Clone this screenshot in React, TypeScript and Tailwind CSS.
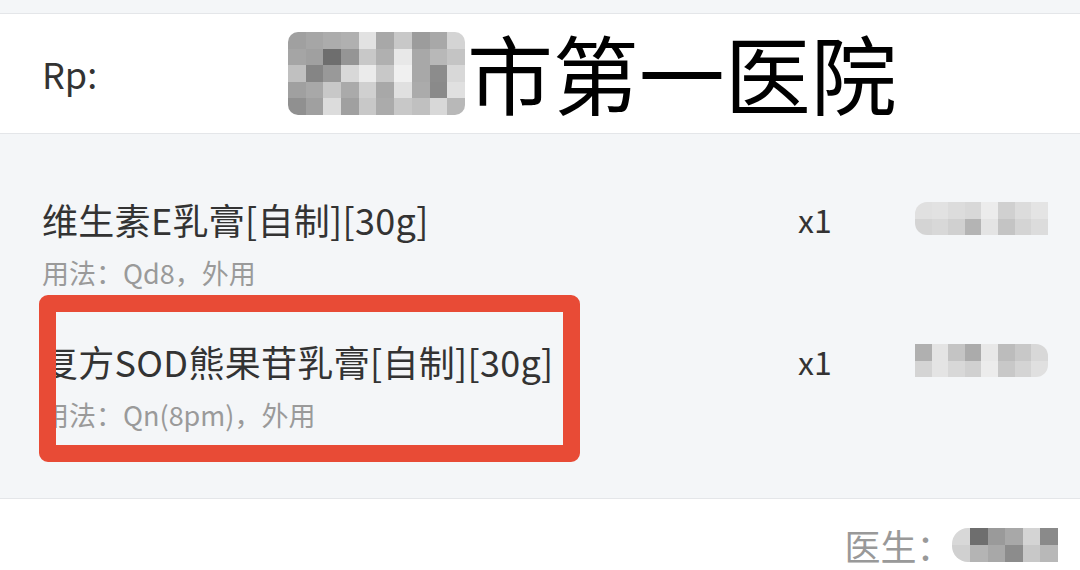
import React from "react";

const hosp: string[][] = [
  ["bg-[#a0a0a0]", "bg-[#a6a6a6]", "bg-[#acacac]", "bg-[#b0b0b0]", "bg-[#e2e2e2]", "bg-[#a8a8a8]", "bg-[#c8c8c8]", "bg-[#9c9c9c]", "bg-[#a8a8a8]", "bg-[#d4d4d4]"],
  ["bg-[#a5a5a5]", "bg-[#a0a0a0]", "bg-[#6e6e6e]", "bg-[#959595]", "bg-[#c8c8c8]", "bg-[#b0b0b0]", "bg-[#e8e8e8]", "bg-[#a8a8a8]", "bg-[#b8b8b8]", "bg-[#c4c4c4]"],
  ["bg-[#c0c0c0]", "bg-[#858585]", "bg-[#999999]", "bg-[#d8d8d8]", "bg-[#ebebeb]", "bg-[#c8c8c8]", "bg-[#f0f0f0]", "bg-[#a8a8a8]", "bg-[#8c8c8c]", "bg-[#d8d8d8]"],
  ["bg-[#a0a0a0]", "bg-[#a8a8a8]", "bg-[#c8c8c8]", "bg-[#aaaaaa]", "bg-[#d0d0d0]", "bg-[#a8a8a8]", "bg-[#e0e0e0]", "bg-[#ababab]", "bg-[#8a8a8a]", "bg-[#e0e0e0]"],
  ["bg-[#909090]", "bg-[#a0a0a0]", "bg-[#dcdcdc]", "bg-[#a0a0a0]", "bg-[#c8c8c8]", "bg-[#ababab]", "bg-[#c8c8c8]", "bg-[#c0c0c0]", "bg-[#d8d8d8]", "bg-[#b8b8b8]"],
];

const blur1: string[][] = [
  ["bg-[#e0e0e0]", "bg-[#e2e2e2]", "bg-[#dcdcdc]", "bg-[#d8d8d8]", "bg-[#ececec]", "bg-[#d0d0d0]", "bg-[#dcdcdc]", "bg-[#e4e4e4]"],
  ["bg-[#d4d4d4]", "bg-[#d8d8d8]", "bg-[#d0d0d0]", "bg-[#b4b4b4]", "bg-[#e4e4e4]", "bg-[#c4c4c4]", "bg-[#d4d4d4]", "bg-[#dcdcdc]"],
];

const blur2: string[][] = [
  ["bg-[#b0b0b0]", "bg-[#e4e4e4]", "bg-[#c4c4c4]", "bg-[#ababab]", "bg-[#e8e8e8]", "bg-[#bcbcbc]", "bg-[#c8c8c8]", "bg-[#d8d8d8]"],
  ["bg-[#d4d4d4]", "bg-[#e4e4e4]", "bg-[#d8d8d8]", "bg-[#d0d0d0]", "bg-[#ececec]", "bg-[#c8c8c8]", "bg-[#d4d4d4]", "bg-[#e0e0e0]"],
];

const blur3: string[][] = [
  ["bg-[#d8d8d8]", "bg-[#6e6e6e]", "bg-[#9a9a9a]", "bg-[#a8a8a8]", "bg-[#d4d4d4]", "bg-[#8a8a8a]"],
  ["bg-[#d0d0d0]", "bg-[#b4b4b4]", "bg-[#a8a8a8]", "bg-[#8c8c8c]", "bg-[#c8c8c8]", "bg-[#b8b8b8]"],
];

function Mosaic({ grid, cell, rounded }: { grid: string[][]; cell: string; rounded: string }) {
  return (
    <div className={`flex flex-col overflow-hidden ${rounded}`}>
      {grid.map((row, i) => (
        <div key={i} className="flex">
          {row.map((c, j) => (
            <div key={j} className={`${cell} ${c}`} />
          ))}
        </div>
      ))}
    </div>
  );
}

function Row({ name, usage, blur, rounded }: { name: string; usage: string; blur: string[][]; rounded: string }) {
  return (
    <div className="flex">
      <div className="w-[798px] pl-[42px]">
        <div className="h-[40px] text-[36px] leading-[40px] tracking-[0.3px] text-[#333333] whitespace-nowrap">{name}</div>
        <div className="mt-[19px] h-[30px] text-[27px] leading-[30px] text-[#9a9a9a] whitespace-nowrap">{usage}</div>
      </div>
      <div className="w-[117px] h-[40px] text-[32px] leading-[40px] text-[#333333]">x1</div>
      <div className="pt-[3px]">
        <Mosaic grid={blur} cell="w-[16.6px] h-[16.5px]" rounded={rounded} />
      </div>
    </div>
  );
}

export default function App() {
  return (
    <div
      className="relative w-[1080px] h-[570px] overflow-hidden bg-[#f4f6f8] flex flex-col"
      style={{ fontFamily: '"Noto Sans CJK SC", "Noto Sans", sans-serif' }}
    >
      <div className="h-[14px] shrink-0 border-b border-[#e4e6e9] bg-[#f4f6f8]" />
      <div className="h-[120px] shrink-0 bg-white border-b border-[#e4e6e9] flex items-center">
        <div className="pl-[42px] w-[288px] text-[36px] text-[#333333] leading-none pb-[2px]">Rp:</div>
        <Mosaic grid={hosp} cell="w-[17.7px] h-[16.5px]" rounded="rounded-[10px]" />
        <div className="ml-[2px] text-[86px] leading-none text-black pb-[4px] whitespace-nowrap">市第一医院</div>
      </div>
      <div className="h-[365px] shrink-0 border-b border-[#e4e6e9] pt-[65px] flex flex-col gap-[53px]">
        <Row name="维生素E乳膏[自制][30g]" usage="用法：Qd8，外用" blur={blur1} rounded="rounded-l-[12px]" />
        <Row name="复方SOD熊果苷乳膏[自制][30g]" usage="用法：Qn(8pm)，外用" blur={blur2} rounded="rounded-r-[12px]" />
      </div>
      <div className="flex-1 bg-white flex items-start justify-end pr-[22px] pt-[24px]">
        <div className="text-[36px] leading-[44px] text-[#999999]">医生：</div>
        <div className="pt-[5px]">
          <Mosaic grid={blur3} cell="w-[17.6px] h-[17px]" rounded="rounded-l-[16px]" />
        </div>
      </div>
      <div className="absolute left-[39px] top-[295px] w-[541px] h-[167px] border-[17px] border-[#e84b36] rounded-[9px]" />
    </div>
  );
}
